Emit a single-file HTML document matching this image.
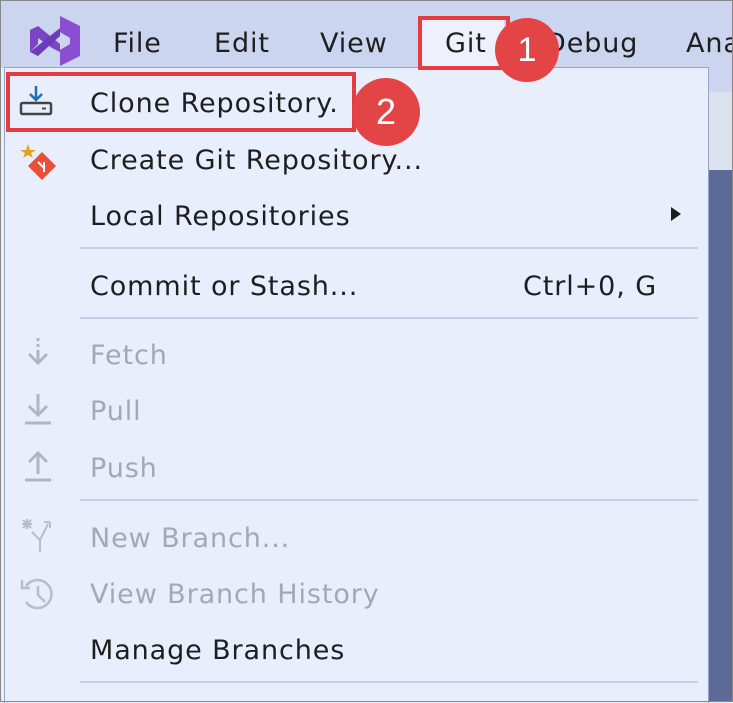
<!DOCTYPE html>
<html><head><style>
body{margin:0;width:733px;height:702px;overflow:hidden;background:#e9eefc;font-family:"Liberation Sans",sans-serif;position:relative}
.a{position:absolute}
.t{position:absolute;font-family:"DejaVu Sans",sans-serif;font-size:27px;letter-spacing:0.9px;color:#1e1e1e;white-space:nowrap;line-height:30px}
.d{color:#a3a8b8}
.sep{position:absolute;left:80px;width:618px;height:2px;background:#c6cfea}
</style></head><body>
<div class="a" style="left:0;top:0;width:733px;height:68px;background:#ccd5ef"></div>
<div class="a" style="left:708px;top:68px;width:25px;height:24px;background:#ccd5ef"></div>
<div class="a" style="left:708px;top:92px;width:25px;height:78px;background:#dce1ee"></div>
<div class="a" style="left:708px;top:170px;width:25px;height:532px;background:#5c6a97"></div>
<div class="a" style="left:706px;top:68px;width:3px;height:634px;background:#3c4868"></div>
<div class="a" style="left:4px;top:67px;width:703px;height:635px;background:#e9eefc;border-left:1px solid #9aa4c4;border-top:1px solid #9aa4c4;border-right:1px solid #9aa4c4"></div>
<svg class="a" style="left:28px;top:14px" width="56" height="54" viewBox="0 0 56 54"><path d="M32 2 L52 12 L52 42 L32 52 L32 36 L42 30 L42 24 L32 18 Z" fill="#8a4fd0"/><path d="M2 16 L10 12 L32 30 L32 38 L24 34 L10 24 L10 30 L2 38 Z" fill="#7a44c4"/><path d="M10 42 L2 38 L32 14 L32 22 Z" fill="#6c3cb8"/></svg>
<div class="t" style="left:113px;top:29px">File</div>
<div class="t" style="left:214px;top:29px">Edit</div>
<div class="t" style="left:320px;top:29px">View</div>
<div class="a" style="left:420px;top:18px;width:84px;height:48px;background:#eef1fc"></div>
<div class="t" style="left:445px;top:29px">Git</div>
<div class="t" style="left:545px;top:29px">Debug</div>
<div class="t" style="left:686px;top:29px">Ana</div>
<div class="a" style="left:418px;top:16px;width:84px;height:46px;border:4px solid #e43c40"></div>
<div class="a" style="left:495px;top:18px;width:64px;height:64px;border-radius:50%;background:#e34446;color:#fff;font-size:34px;text-align:center;line-height:64px">1</div>
<svg class="a" style="left:18px;top:84px" width="36" height="36"><path d="M18 2V16M12 10L18 16L24 10" stroke="#1e6fb5" stroke-width="2.5" fill="none"/><rect x="3" y="19" width="30" height="11" rx="1.5" fill="none" stroke="#444" stroke-width="2.5"/><path d="M24 24.5H28" stroke="#444" stroke-width="2"/></svg>
<div class="t" style="left:90px;top:89px">Clone Repository.</div>
<div class="a" style="left:6px;top:72px;width:342px;height:52px;border:4px solid #e43c40"></div>
<div class="a" style="left:352px;top:78px;width:68px;height:68px;border-radius:50%;background:#e34446;color:#fff;font-size:36px;text-align:center;line-height:68px">2</div>
<svg class="a" style="left:18px;top:142px" width="40" height="40"><path d="M10 2L12 8L18 8L13 11L15 16L10 13L5 16L7 11L2 8L8 8Z" fill="#e6a020"/><path d="M24 10L38 24L24 38L10 24Z" fill="#e8503a"/><path d="M20 20L26 26M26 20V30" stroke="#fff" stroke-width="2"/></svg>
<div class="t" style="left:90px;top:146px">Create Git Repository...</div>
<div class="t" style="left:90px;top:202px">Local Repositories</div>
<svg class="a" style="left:670px;top:206px" width="12" height="16"><path d="M1 1L11 8L1 15Z" fill="#1e1e1e"/></svg>
<div class="sep" style="top:247px"></div>
<div class="t" style="left:90px;top:272px">Commit or Stash...</div>
<div class="t" style="left:523px;top:272px">Ctrl+0, G</div>
<div class="sep" style="top:317px"></div>
<svg class="a" style="left:20px;top:336px" width="36" height="36"><path d="M18 2V5M18 8V11M18 14V26M9 18L18 27L27 18" stroke="#b0b6c6" stroke-width="3" fill="none"/></svg>
<div class="t d" style="left:90px;top:341px">Fetch</div>
<svg class="a" style="left:20px;top:392px" width="36" height="36"><path d="M18 2V22M9 14L18 23L27 14M5 31H31" stroke="#b0b6c6" stroke-width="3" fill="none"/></svg>
<div class="t d" style="left:90px;top:397px">Pull</div>
<svg class="a" style="left:20px;top:448px" width="36" height="36"><path d="M18 26V6M9 14L18 5L27 14M5 32H31" stroke="#b0b6c6" stroke-width="3" fill="none"/></svg>
<div class="t d" style="left:90px;top:454px">Push</div>
<div class="sep" style="top:499px"></div>
<svg class="a" style="left:18px;top:518px" width="40" height="36"><path d="M4 6H14M9 1V11M5 2L13 10M13 2L5 10M14 14L22 22L30 6M22 22L22 34M32 4H26M32 4V10" stroke="#b8bdcc" stroke-width="2" fill="none"/></svg>
<div class="t d" style="left:90px;top:524px">New Branch...</div>
<svg class="a" style="left:18px;top:574px" width="40" height="40"><path d="M8 12A14 14 0 1 1 8 28M4 6V14H12M20 12V21L27 28" stroke="#b8bdcc" stroke-width="2.5" fill="none"/></svg>
<div class="t d" style="left:90px;top:580px">View Branch History</div>
<div class="t" style="left:90px;top:636px">Manage Branches</div>
<div class="sep" style="top:681px"></div>
<div class="a" style="left:0;top:0;width:731px;height:700px;border:1px solid #888"></div>
</body></html>
